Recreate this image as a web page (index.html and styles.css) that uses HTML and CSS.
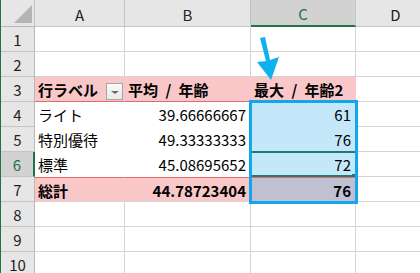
FILE: index.html
```html
<!DOCTYPE html>
<html lang="ja">
  <head>
    <meta charset="UTF-8" />
    <title>Sheet1</title>
    <link rel="stylesheet" href="styles.css">
  </head>
  <body>
    <div class="sheet">
      <div class="grid">
        <!-- column headers -->
        <div class="hd corner"><span class="tri"></span></div>
        <div class="hd col">A</div>
        <div class="hd col">B</div>
        <div class="hd col active">C</div>
        <div class="hd col">D</div>

        <div class="hd row">1</div>
        <div class="c"></div><div class="c"></div><div class="c"></div><div class="c"></div>

        <div class="hd row">2</div>
        <div class="c"></div><div class="c"></div><div class="c"></div><div class="c"></div>

        <div class="hd row">3</div>
        <div class="c pv-head label">行ラベル<span class="drop"></span></div>
        <div class="c pv-head">平均 / 年齢</div>
        <div class="c pv-head">最大 / 年齢2</div>
        <div class="c"></div>

        <div class="hd row">4</div>
        <div class="c pv">ライト</div>
        <div class="c pv num">39.66666667</div>
        <div class="c pv sel num">61</div>
        <div class="c"></div>

        <div class="hd row">5</div>
        <div class="c pv">特別優待</div>
        <div class="c pv num">49.33333333</div>
        <div class="c pv sel num">76</div>
        <div class="c"></div>

        <div class="hd row active-row">6</div>
        <div class="c pv">標準</div>
        <div class="c pv num">45.08695652</div>
        <div class="c pv sel cur num">72<span class="handle"></span></div>
        <div class="c"></div>

        <div class="hd row">7</div>
        <div class="c pv-total">総計</div>
        <div class="c pv-total num">44.78723404</div>
        <div class="c pv-total sel-total num">76</div>
        <div class="c"></div>

        <div class="hd row">8</div>
        <div class="c"></div><div class="c"></div><div class="c"></div><div class="c"></div>

        <div class="hd row">9</div>
        <div class="c"></div><div class="c"></div><div class="c"></div><div class="c"></div>

        <div class="hd row">10</div>
        <div class="c"></div><div class="c"></div><div class="c"></div><div class="c"></div>
      </div>

      <!-- selected range C4:C7 -->
      <div class="selection"></div>

      <!-- callout arrow -->
      <svg class="arrow" width="420" height="273" viewBox="0 0 420 273">
        <polygon points="259,38 264,37 269,60 278,57 270,80 256,62 265,61" fill="#0fb0ee" />
      </svg>
    </div>
  </body>
</html>
```

FILE: styles.css
```css
* {
  box-sizing: border-box;
}

body {
  margin: 0;
  background: #fff;
  font-family: "Noto Sans CJK JP", "Noto Sans", sans-serif;
  font-size: 15px;
  color: #000;
}

.sheet {
  position: relative;
  width: 420px;
  height: 273px;
  overflow: hidden;
  border-left: 1px solid #217346;
}

.grid {
  display: grid;
  grid-template-columns: 34px 90px 126px 105px 80px;
  grid-template-rows: 27px repeat(10, 25px);
}

.hd {
  background: #e6e6e6;
  border-right: 1px solid #c4c4c4;
  border-bottom: 1px solid #c4c4c4;
  display: flex;
  align-items: center;
  justify-content: center;
  color: #222;
  line-height: 1;
}

.hd.col {
  padding-top: 2px;
}

.hd.row {
  border-right-color: #b8b8b8;
}

.hd.active {
  background: #d2d2d2;
  color: #217346;
  border-bottom: 2px solid #217346;
}

.hd.active-row {
  background: #d2d2d2;
  color: #217346;
  border-right: 2px solid #217346;
}

.corner {
  position: relative;
  border-bottom-color: #b8b8b8;
}

.corner .tri {
  position: absolute;
  right: 2px;
  bottom: 3px;
  width: 0;
  height: 0;
  border-left: 18px solid transparent;
  border-bottom: 18px solid #b4b4b4;
}

.c {
  border-right: 1px solid #d4d4d4;
  border-bottom: 1px solid #d4d4d4;
  display: flex;
  align-items: center;
  padding: 0 3px;
  white-space: pre;
  line-height: 1;
  position: relative;
}

.num {
  justify-content: flex-end;
  padding-right: 4px;
}

/* pivot table */
.pv-head {
  background: #f9c7c7;
  border-right-color: #f9c7c7;
  border-bottom: 1px solid #e46a6a;
  font-weight: bold;
  word-spacing: 4px;
}

.pv-head.label {
  justify-content: space-between;
  padding-right: 1px;
}

.drop {
  width: 17px;
  height: 17px;
  border: 1px solid #a6a6a6;
  background: linear-gradient(#fafafa, #e9e9e9);
  position: relative;
  margin-top: 5px;
}

.drop::after {
  content: "";
  position: absolute;
  left: 4px;
  top: 7px;
  border-left: 4px solid transparent;
  border-right: 4px solid transparent;
  border-top: 3px solid #666;
}

.pv {
  border-right-color: #fff;
  border-bottom-color: #fff;
}

.pv-total {
  background: #f9c7c7;
  border-top: 1px solid #e46a6a;
  border-right-color: #f9c7c7;
  font-weight: bold;
  padding-top: 1px;
}

.pv.sel {
  background: #c4e8f9;
  border-right-color: #c4e8f9;
  border-bottom-color: #c4e8f9;
}

.pv.cur {
  border-top: 2px solid #1f7b6e;
  border-bottom: 2px solid #1f7b6e;
  margin-top: -1px;
}

.handle {
  position: absolute;
  right: -1px;
  bottom: -3px;
  width: 4px;
  height: 4px;
  background: #1f7b6e;
}

.sel-total {
  background: #c1bfd2;
  border-right-color: #c1bfd2;
}

.selection {
  position: absolute;
  left: 248px;
  top: 100px;
  width: 109px;
  height: 104px;
  border: 3px solid #14a6ea;
  pointer-events: none;
}

.arrow {
  position: absolute;
  left: 0;
  top: 0;
}
```
